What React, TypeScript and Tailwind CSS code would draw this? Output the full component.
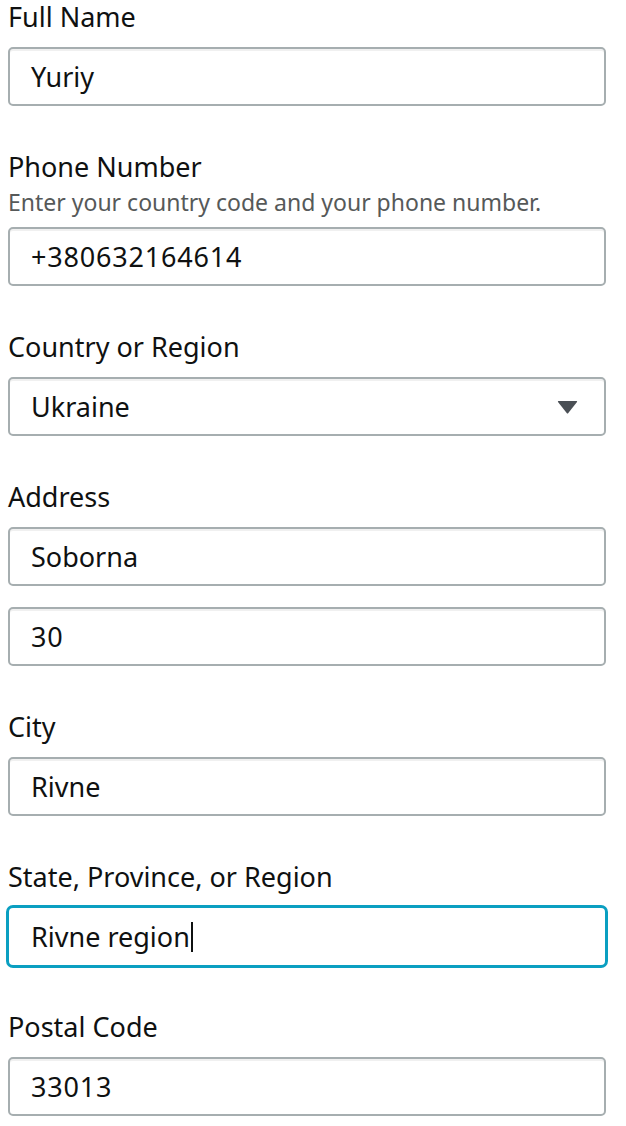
import React from "react";

const font = { fontFamily: '"Noto Sans", "Open Sans", Arial, sans-serif' };

function Field({ value, focused, caret, digits }: { value: string; focused?: boolean; caret?: boolean; digits?: boolean }) {
  return (
    <div
      className={
        focused
          ? "flex h-[63px] items-center rounded-[7px] border-[3px] border-[#0a9fc1] bg-white pl-[22px] text-[27px] text-[#0f1111]"
          : "flex h-[59px] items-center rounded-[5px] border-2 border-[#a6aeb0] bg-white pl-[21px] text-[27px] text-[#0f1111] shadow-[inset_0_2px_0_rgba(0,0,0,0.06)]"
      }
    >
      <span className={digits ? "leading-none tracking-[0.8px]" : "leading-none"}>{value}</span>
      {caret && <span className="ml-[1px] inline-block h-[30px] w-[2px] bg-[#0f1111]" />}
    </div>
  );
}

function Label({ children }: { children: React.ReactNode }) {
  return <div className="text-[27px] leading-[34px] text-[#0f1111]">{children}</div>;
}

export default function App() {
  return (
    <div className="min-h-[1126px] bg-white pl-[8px] pr-[20px]" style={font}>
      <div className="flex flex-col">
        <Label>Full Name</Label>
        <div className="mt-[13px]">
          <Field value="Yuriy" />
        </div>

        <div className="mt-[44px]">
          <Label>Phone Number</Label>
          <div className="mt-[4px] text-[23px] leading-[28px] text-[#565959]">
            Enter your country code and your phone number.
          </div>
          <div className="mt-[11px]">
            <Field value="+380632164614" digits />
          </div>
        </div>

        <div className="mt-[44px]">
          <Label>Country or Region</Label>
          <div className="mt-[13px]">
            <div className="flex h-[59px] items-center justify-between rounded-[5px] border-2 border-[#a6aeb0] bg-white pl-[21px] pr-[26px] text-[27px] text-[#0f1111] shadow-[inset_0_2px_0_rgba(0,0,0,0.06)]">
              <span className="leading-none">Ukraine</span>
              <svg width="21" height="14" viewBox="0 0 21 14">
                <path d="M1.5 1 L19.5 1 Q20.5 1 20 2 L11.3 13 Q10.5 14 9.7 13 L1 2 Q0.5 1 1.5 1 Z" fill="#4a4f55" />
              </svg>
            </div>
          </div>
        </div>

        <div className="mt-[44px]">
          <Label>Address</Label>
          <div className="mt-[13px]">
            <Field value="Soborna" />
          </div>
          <div className="mt-[21px]">
            <Field value="30" digits />
          </div>
        </div>

        <div className="mt-[44px]">
          <Label>City</Label>
          <div className="mt-[13px]">
            <Field value="Rivne" />
          </div>
        </div>

        <div className="mt-[44px]">
          <Label>State, Province, or Region</Label>
          <div className="mt-[11px] -ml-[2px] -mr-[2px]">
            <Field value="Rivne region" focused caret />
          </div>
        </div>

        <div className="mt-[42px]">
          <Label>Postal Code</Label>
          <div className="mt-[13px]">
            <Field value="33013" digits />
          </div>
        </div>
      </div>
    </div>
  );
}
